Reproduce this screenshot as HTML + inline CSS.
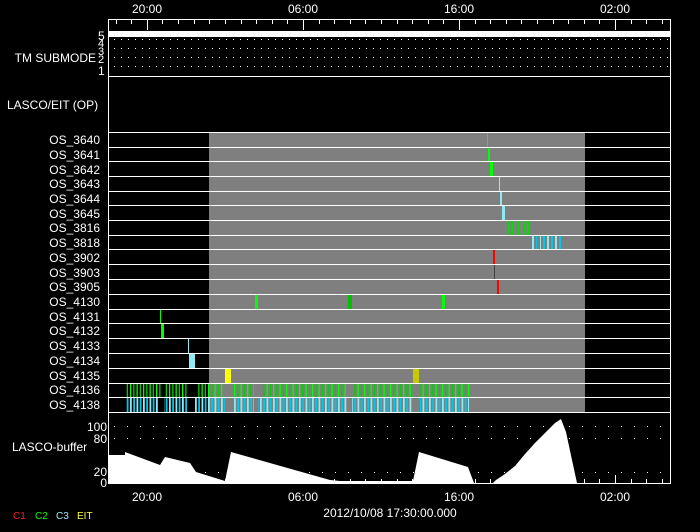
<!DOCTYPE html>
<html><head><style>
html,body{margin:0;padding:0;background:#000;}
svg{display:block;}
text{font-family:"Liberation Sans",sans-serif;fill:#fff;font-size:12px;}
</style></head><body>
<svg width="700" height="532" xmlns="http://www.w3.org/2000/svg">
<defs>
<pattern id="gp" x="0" y="0" width="6.5" height="20" patternUnits="userSpaceOnUse">
<rect x="0" y="0" width="1.3" height="20" fill="#00ff00"/><rect x="3.2" y="0" width="1.3" height="20" fill="#00d000"/>
</pattern>
<pattern id="cp" x="0" y="0" width="6.5" height="20" patternUnits="userSpaceOnUse">
<rect x="0" y="0" width="1.8" height="20" fill="#90e8f4"/><rect x="3.2" y="0" width="1.8" height="20" fill="#00c8e8"/>
</pattern>
</defs>
<rect width="700" height="532" fill="#000"/>
<rect x="209" y="132" width="376" height="281" fill="#7f7f7f"/>
<text x="147" y="13" text-anchor="middle">20:00</text>
<text x="303" y="13" text-anchor="middle">06:00</text>
<text x="459" y="13" text-anchor="middle">16:00</text>
<text x="615" y="13" text-anchor="middle">02:00</text>
<g stroke="#fff" stroke-width="1">
<path d="M116.5 19v5M131.5 19v5M147.5 19v11M162.5 19v5M178.5 19v5M194.5 19v5M209.5 19v5M225.5 19v5M241.5 19v5M256.5 19v5M272.5 19v5M287.5 19v5M303.5 19v11M319.5 19v5M334.5 19v5M350.5 19v5M365.5 19v5M381.5 19v5M397.5 19v5M412.5 19v5M428.5 19v5M443.5 19v5M459.5 19v11M475.5 19v5M490.5 19v5M506.5 19v5M521.5 19v5M537.5 19v5M553.5 19v5M568.5 19v5M584.5 19v5M599.5 19v5M615.5 19v11M631.5 19v5M646.5 19v5M662.5 19v5"/>
<path d="M116.5 483v-4M131.5 483v-4M147.5 483v-8M162.5 483v-4M178.5 483v-4M194.5 483v-4M209.5 483v-4M225.5 483v-4M241.5 483v-4M256.5 483v-4M272.5 483v-4M287.5 483v-4M303.5 483v-8M319.5 483v-4M334.5 483v-4M350.5 483v-4M365.5 483v-4M381.5 483v-4M397.5 483v-4M412.5 483v-4M428.5 483v-4M443.5 483v-4M459.5 483v-8M475.5 483v-4M490.5 483v-4M506.5 483v-4M521.5 483v-4M537.5 483v-4M553.5 483v-4M568.5 483v-4M584.5 483v-4M599.5 483v-4M615.5 483v-8M631.5 483v-4M646.5 483v-4M662.5 483v-4"/>
</g>
<rect x="108" y="31" width="563" height="6" fill="#fff"/>
<g stroke="#fff" stroke-width="1" stroke-dasharray="1 6">
<path d="M114 39.5H671M114 48.5H671M114 57.5H671M114 66.5H671"/>
<path d="M114 426.5H671M114 438.5H671M114 472.5H671" stroke-dasharray="1 12"/>
</g>
<text x="96" y="62" text-anchor="end">TM SUBMODE</text>
<text x="98" y="40" style="font-size:12px">5</text><text x="98" y="47" style="font-size:11px">4</text><text x="98" y="55" style="font-size:11px">3</text><text x="98" y="63" style="font-size:11px">2</text><text x="98" y="75" style="font-size:12px">1</text>
<text x="7" y="109">LASCO/EIT (OP)</text>
<g text-anchor="end">
<text x="100" y="144">OS_3640</text><text x="100" y="159">OS_3641</text><text x="100" y="174">OS_3642</text><text x="100" y="188">OS_3643</text><text x="100" y="203">OS_3644</text><text x="100" y="218">OS_3645</text><text x="100" y="232">OS_3816</text><text x="100" y="247">OS_3818</text><text x="100" y="262">OS_3902</text><text x="100" y="277">OS_3903</text><text x="100" y="291">OS_3905</text><text x="100" y="306">OS_4130</text><text x="100" y="321">OS_4131</text><text x="100" y="335">OS_4132</text><text x="100" y="350">OS_4133</text><text x="100" y="365">OS_4134</text><text x="100" y="380">OS_4135</text><text x="100" y="394">OS_4136</text><text x="100" y="409">OS_4138</text>
</g>
<rect x="487" y="133" width="1" height="14" fill="#00ff00"/>
<rect x="488" y="147" width="2" height="14" fill="#00ff00"/>
<rect x="490" y="162" width="3" height="14" fill="#00ff00"/>
<rect x="499" y="177" width="1" height="14" fill="#90e8f4"/>
<rect x="500" y="191" width="2" height="14" fill="#90e8f4"/>
<rect x="502" y="206" width="3" height="14" fill="#90e8f4"/>
<g fill="#00e000"><rect x="505" y="221" width="1" height="14"/><rect x="508" y="221" width="2" height="14"/><rect x="512" y="221" width="1" height="14"/><rect x="515" y="221" width="1" height="14"/><rect x="518" y="221" width="1" height="14"/><rect x="521" y="221" width="1" height="14"/><rect x="524" y="221" width="1" height="14"/><rect x="527" y="221" width="2" height="14"/></g>
<g><rect x="532" y="236" width="2" height="14" fill="#90e8f4"/><rect x="536" y="236" width="1" height="14" fill="#00c8e8"/><rect x="540" y="236" width="1" height="14" fill="#90e8f4"/><rect x="543" y="236" width="2" height="14" fill="#00c8e8"/><rect x="547" y="236" width="2" height="14" fill="#90e8f4"/><rect x="551" y="236" width="2" height="14" fill="#00c8e8"/><rect x="555" y="236" width="2" height="14" fill="#90e8f4"/><rect x="559" y="236" width="2" height="14" fill="#00c8e8"/></g>
<rect x="493" y="250" width="2" height="14" fill="#ff0000"/>
<rect x="494" y="265" width="1" height="14" fill="#404040"/>
<rect x="497" y="280" width="2" height="14" fill="#ff0000"/>
<rect x="255" y="295" width="3" height="14" fill="#00ff00"/><rect x="348" y="295" width="4" height="14" fill="#00c000"/><rect x="442" y="295" width="3" height="14" fill="#00ff00"/>
<rect x="160" y="310" width="1" height="14" fill="#00ff00"/>
<rect x="161" y="324" width="3" height="14" fill="#00ff00"/>
<rect x="188" y="339" width="1" height="14" fill="#90e8f4"/>
<rect x="189" y="354" width="6" height="14" fill="#90e8f4"/>
<rect x="225" y="369" width="6" height="14" fill="#ffff00"/><rect x="413" y="369" width="6" height="14" fill="#c8c800"/>
<g fill="url(#gp)"><rect x="125" y="384" width="36" height="14"/><rect x="165" y="384" width="23" height="14"/><rect x="197" y="384" width="27" height="14"/><rect x="233" y="384" width="21" height="14"/><rect x="262" y="384" width="86" height="14"/><rect x="353" y="384" width="60" height="14"/><rect x="420" y="384" width="51" height="14"/></g>
<g fill="url(#cp)"><rect x="126" y="398" width="32" height="14"/><rect x="164" y="398" width="24" height="14"/><rect x="195" y="398" width="30" height="14"/><rect x="233" y="398" width="21" height="14"/><rect x="258" y="398" width="89" height="14"/><rect x="352" y="398" width="60" height="14"/><rect x="420" y="398" width="49" height="14"/></g>
<g stroke="#fff" stroke-width="1">
<path d="M108 132.5H671M108 147.5H671M108 161.5H671M108 176.5H671M108 191.5H671M108 205.5H671M108 220.5H671M108 235.5H671M108 249.5H671M108 264.5H671M108 279.5H671M108 294.5H671M108 309.5H671M108 323.5H671M108 338.5H671M108 353.5H671M108 368.5H671M108 383.5H671M108 397.5H671M108 412.5H671"/>
<path d="M108 76.5H671"/>
</g>
<path fill="#fff" d="M108 483V455H125V452L160 465L165 457L190 463L196 472L225 481L231 452L330 480L340 481H413L419 452L468 467L474 483ZM493 483L496 480L505 474L515 466L525 454L535 443L545 433L555 423L561 419L566 432L572 460L577 483Z"/>
<path d="M473 483.5H493M577 483.5H671" stroke="#e00000" stroke-width="1"/>
<text x="12" y="451">LASCO-buffer</text>
<g text-anchor="end"><text x="107" y="431">100</text><text x="107" y="443">80</text><text x="107" y="476">20</text><text x="107" y="487">0</text></g>
<rect x="108.5" y="19.5" width="562" height="464" fill="none" stroke="#fff" stroke-width="1"/>
<text x="147" y="501" text-anchor="middle">20:00</text>
<text x="303" y="501" text-anchor="middle">06:00</text>
<text x="459" y="501" text-anchor="middle">16:00</text>
<text x="615" y="501" text-anchor="middle">02:00</text>
<text x="390" y="517" text-anchor="middle">2012/10/08 17:30:00.000</text>
<text x="13" y="519" style="fill:#ff2020;font-size:10px">C1</text><text x="35" y="519" style="fill:#00ff00;font-size:10px">C2</text><text x="56" y="519" style="fill:#a0e8f8;font-size:10px">C3</text><text x="77" y="519" style="fill:#ffff40;font-size:10px">EIT</text>
</svg>
</body></html>
